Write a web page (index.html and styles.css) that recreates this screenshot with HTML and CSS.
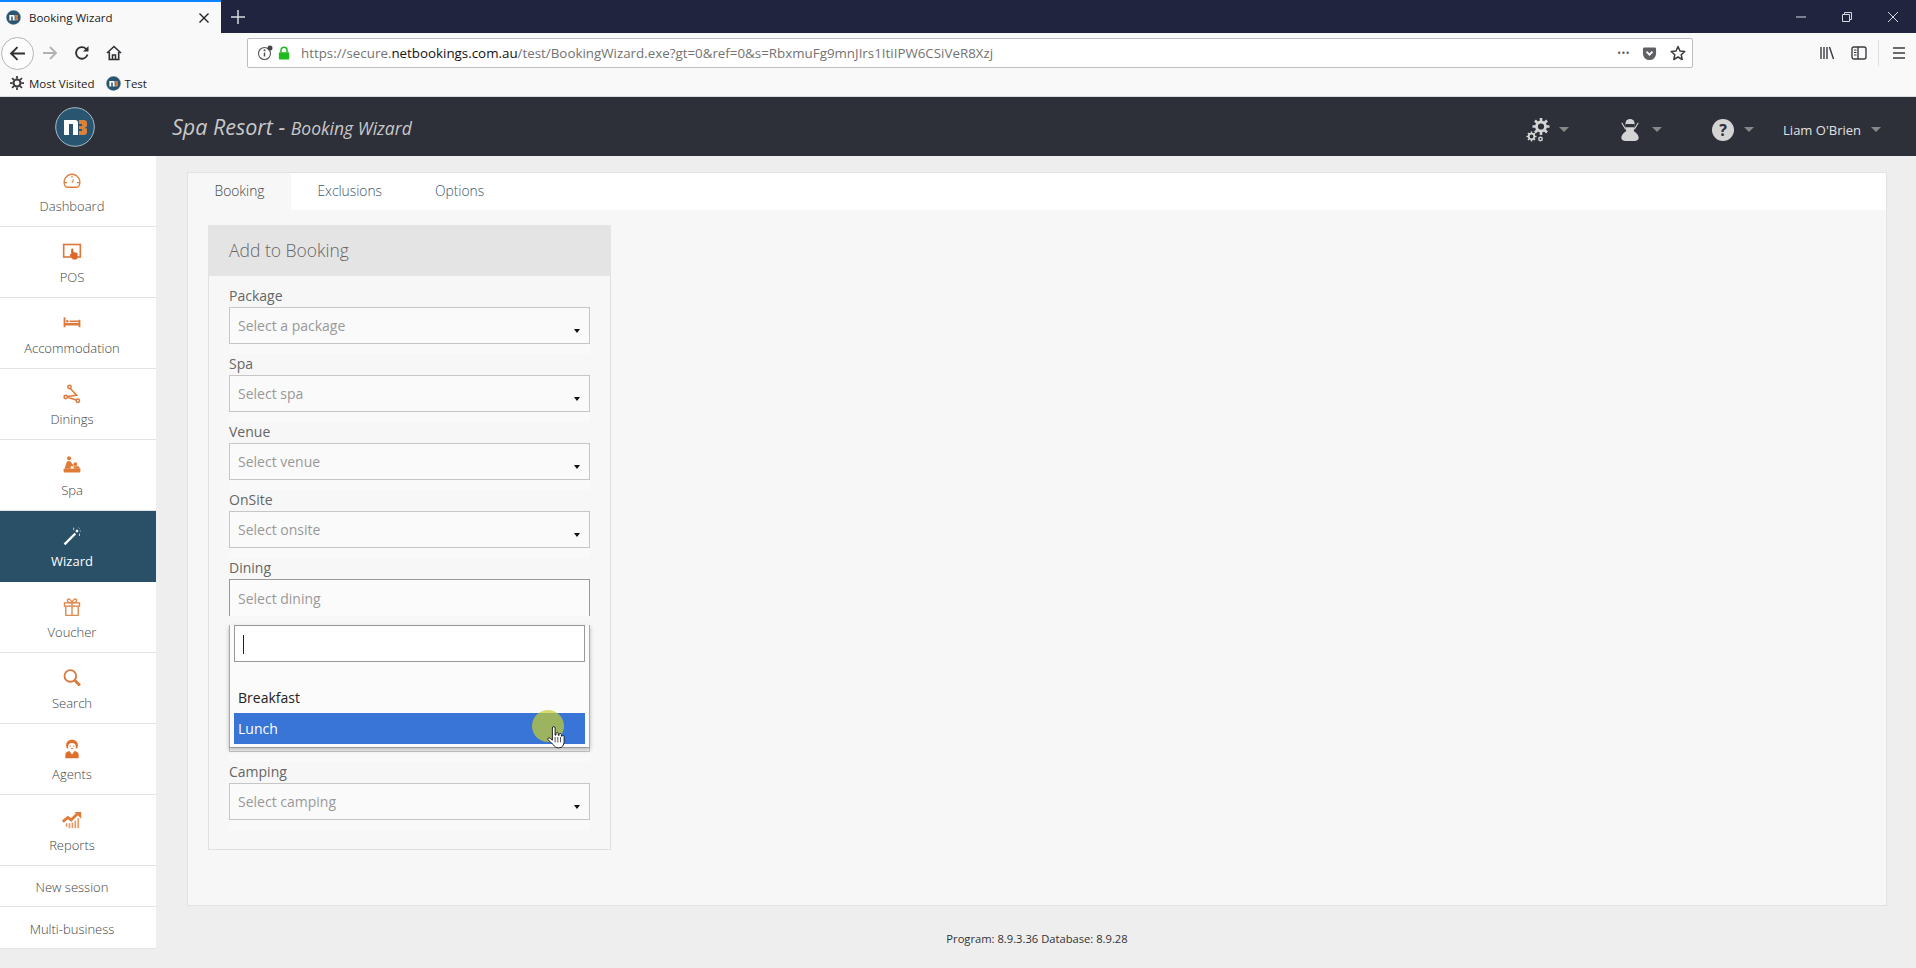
FILE: index.html
```html
<!DOCTYPE html>
<html lang="en">
<head>
<meta charset="utf-8">
<title>Booking Wizard</title>
<link rel="stylesheet" href="styles.css">
</head>
<body>
<svg class="defs" width="0" height="0" aria-hidden="true">
  <symbol id="nb" viewBox="0 0 40 40">
    <circle cx="20" cy="20" r="19.3" fill="#2a5570" stroke="#a9bcc8" stroke-width="1"/>
    <path d="M9 28V13h11a3 3 0 0 1 3 3v12h-5V17h-4v11z" fill="#fff"/>
    <path d="M24 13h5a3 3 0 0 1 3 3v3.5L30 20.500l2 1.500V25a3 3 0 0 1-3 3h-5v-4h3v-2h-3v-3h3v-2h-3z" fill="#d9823b"/>
  </symbol>
</svg>

<header class="titlebar">
  <div class="tab">
    <svg class="favicon"><use href="#nb"/></svg>
    <span class="tab-title">Booking Wizard</span>
    <svg class="tab-close" viewBox="0 0 12 12"><path d="M1.500 1.500l9 9M10.500 1.500l-9 9" stroke="#222" stroke-width="1.400"/></svg>
  </div>
  <svg class="new-tab" viewBox="0 0 14 14"><path d="M7 0v14M0 7h14" stroke="#d8d9e0" stroke-width="1.500"/></svg>
  <div class="win-controls">
    <svg viewBox="0 0 12 12"><path d="M1 6h10" stroke="#d8d9e0"/></svg>
    <svg viewBox="0 0 12 12"><path d="M1.500 3.500h7v7h-7zM3.500 3.500v-2h7v7h-2" fill="none" stroke="#d8d9e0"/></svg>
    <svg viewBox="0 0 12 12"><path d="M1 1l10 10M11 1L1 11" stroke="#d8d9e0"/></svg>
  </div>
</header>

<div class="navbar">
  <div class="nav-btns">
    <span class="back-btn"><svg viewBox="0 0 16 16"><path d="M15 8H2M8 2L2 8l6 6" fill="none" stroke="#2e2e33" stroke-width="1.800"/></svg></span>
    <svg class="nav-ic forward" viewBox="0 0 16 16"><path d="M1 8h13M8 2l6 6-6 6" fill="none" stroke="#b1b1b3" stroke-width="1.800"/></svg>
    <svg class="nav-ic reload" viewBox="0 0 16 16"><path d="M13.500 9.500A5.800 5.800 0 1 1 12 3.800" fill="none" stroke="#2e2e33" stroke-width="1.800"/><path d="M9 6.500h5.500V1z" fill="#2e2e33"/></svg>
    <svg class="nav-ic home" viewBox="0 0 16 16"><path d="M1 8l7-6.500L15 8M3.300 7v7.500h9.400V7" fill="none" stroke="#2e2e33" stroke-width="1.600"/><path d="M6.500 14.500V10h3v4.500" fill="none" stroke="#2e2e33" stroke-width="1.500"/></svg>
  </div>
  <div class="urlbar">
    <svg class="url-info" viewBox="0 0 16 16"><circle cx="7.500" cy="8.500" r="6" fill="none" stroke="#555" stroke-width="1.100"/><path d="M7.500 7.500v4" stroke="#555" stroke-width="1.500"/><circle cx="7.500" cy="5.300" r="1" fill="#555"/><circle cx="13" cy="3" r="2.500" fill="#444"/></svg>
    <svg class="url-lock" viewBox="0 0 14 16"><path d="M3.500 7V4.800a3.500 3.500 0 0 1 7 0V7" fill="none" stroke="#1ebb1e" stroke-width="1.800"/><rect x="1" y="7" width="12" height="8.500" rx="1" fill="#1ebb1e"/></svg>
    <span class="url-text">https://secure.<b class="url-domain">netbookings.com.au</b>/test/BookingWizard.exe?gt=0&amp;ref=0&amp;s=RbxmuFg9mnJIrs1ItiIPW6CSiVeR8Xzj</span>
    <span class="url-dots">•••</span>
    <svg class="url-pocket" viewBox="0 0 16 16"><path d="M1 3a1.500 1.500 0 0 1 1.500-1.500h11A1.500 1.500 0 0 1 15 3v5a7 7 0 0 1-14 0z" fill="#5f5f64"/><path d="M4.800 6L8 9.200 11.200 6" fill="none" stroke="#fff" stroke-width="2"/></svg>
    <svg class="url-star" viewBox="0 0 16 16"><path d="M8 1.500l2 4.500 4.800.5-3.600 3.200 1 4.800L8 12l-4.200 2.500 1-4.800L1.200 6.500 6 6z" fill="none" stroke="#3c3c40" stroke-width="1.500" stroke-linejoin="round"/></svg>
  </div>
  <div class="tool-btns">
    <svg class="tool-lib" viewBox="0 0 16 16"><path d="M2 2v12M5 2v12M8 2v12M10.500 2l4 12" stroke="#3c3c40" stroke-width="1.400" fill="none"/></svg>
    <svg class="tool-side" viewBox="0 0 16 16"><rect x="1" y="2" width="14" height="12" rx="2" fill="none" stroke="#3c3c40" stroke-width="1.400"/><path d="M7 2v12" stroke="#3c3c40" stroke-width="1.400"/><path d="M3 5h2.500M3 7.500h2.500M3 10h2.500" stroke="#3c3c40"/></svg>
    <span class="tool-sep"></span>
    <svg class="tool-menu" viewBox="0 0 16 16"><path d="M2 3h12M2 8h12M2 13h12" stroke="#3c3c40" stroke-width="1.600"/></svg>
  </div>
</div>

<div class="bookmarks">
  <svg class="bm-gear" viewBox="0 0 16 16"><circle cx="8" cy="8" r="4" fill="none" stroke="#3c3c40" stroke-width="2.400"/><path d="M8 0v3M8 13v3M0 8h3M13 8h3M2.300 2.300l2.200 2.200M11.500 11.500l2.200 2.200M13.700 2.300l-2.200 2.200M4.500 11.500l-2.200 2.200" stroke="#3c3c40" stroke-width="2"/></svg>
  <span class="bm-text bm-first">Most Visited</span>
  <svg class="favicon bm-fav"><use href="#nb"/></svg>
  <span class="bm-text">Test</span>
</div>

<div class="app-header">
  <svg class="app-logo"><use href="#nb"/></svg>
  <div class="app-title"><span class="app-resort">Spa Resort - </span><span class="app-page">Booking Wizard</span></div>
  <div class="app-menu">
    <div class="menu-item menu-gears">
      <svg class="ic-gears" viewBox="0 0 24 24"><g fill="none" stroke="#d4d4d4"><circle cx="15" cy="8.500" r="4.500" stroke-width="2.800"/><path d="M15 0v3.500M15 13.500V17M6.500 8.500H10M20 8.500h3.500M9 2.500l2.500 2.500M18.500 12l2.500 2.500M21 2.500L18.500 5M11.500 12L9 14.500" stroke-width="2.600"/><circle cx="5.500" cy="18.500" r="2.800" stroke-width="1.800"/><path d="M5.500 13.500v2M5.500 21.500v2M.5 18.500h2M8.500 18.500h2M2 15l1.400 1.400M7.600 20.600L9 22M9 15l-1.400 1.400M3.400 20.600L2 22" stroke-width="1.600"/><circle cx="14.500" cy="21" r="1.700" stroke-width="1.500"/></g></svg>
      <i class="caret"></i>
    </div>
    <div class="menu-item menu-agent">
      <svg class="ic-agent" viewBox="0 0 24 24"><path d="M12 0a5 5 0 0 0-5 5v5a5 5 0 0 0 10 0V5a5 5 0 0 0-5-5z" fill="#d4d4d4"/><path d="M7 5.500h10V9H7z" fill="#2d2f39"/><path d="M3 4l4 7M21 4l-4 7" stroke="#d4d4d4" stroke-width="1.200"/><path d="M8 13h8c3 2 5.500 4.500 5.500 7.500 0 2.500-2.500 3.500-4.500 3.500H7c-2 0-4.500-1-4.500-3.500C2.500 17.500 5 15 8 13z" fill="#d4d4d4"/></svg>
      <i class="caret"></i>
    </div>
    <div class="menu-item menu-help">
      <span class="ic-help">?</span>
      <i class="caret"></i>
    </div>
    <div class="menu-item menu-user">
      <span class="user-name">Liam O'Brien</span>
      <i class="caret"></i>
    </div>
  </div>
</div>

<div class="workspace">
  <nav class="sidebar">
    <a class="side-item">
      <svg viewBox="0 0 24 24"><path d="M4 18.500a9.500 9.500 0 1 1 16 0c-.5.800-1.500 1-2 1H6c-.5 0-1.500-.2-2-1z" fill="none" stroke="#dd7b3e" stroke-width="1.600"/><path d="M3 14h3M18 14h3M12 6v2M12.500 14l1.200-4" stroke="#dd7b3e" stroke-width="1.400"/></svg>
      <span>Dashboard</span>
    </a>
    <a class="side-item">
      <svg viewBox="0 0 24 24"><rect x="2" y="3" width="20" height="15" fill="none" stroke="#dd7b3e" stroke-width="2"/><path d="M11 9a1.300 1.300 0 0 1 2.600 0v3l5 1.200V19a2 2 0 0 1-2 2h-3.500L9 15.500l1.500-1 .5.500z" fill="#e0672a"/></svg>
      <span>POS</span>
    </a>
    <a class="side-item">
      <svg viewBox="0 0 24 24"><path d="M3 5v12M21 8v9" stroke="#dd7b3e" stroke-width="2.200"/><path d="M3 13.500h18" stroke="#dd7b3e" stroke-width="3"/><path d="M9 9h12v2H9z" fill="#dd7b3e"/><circle cx="6.300" cy="10" r="1.500" fill="#dd7b3e"/></svg>
      <span>Accommodation</span>
    </a>
    <a class="side-item">
      <svg viewBox="0 0 24 24"><g fill="none" stroke="#dd7b3e" stroke-width="1.900"><circle cx="9" cy="3.500" r="2"/><circle cx="4.500" cy="15.500" r="2"/><circle cx="19" cy="20" r="2"/><path d="M10 5.500l7.500 8-11 1.500M6.500 16l10.700 3.300"/></g></svg>
      <span>Dinings</span>
    </a>
    <a class="side-item">
      <svg viewBox="0 0 24 24"><circle cx="8.500" cy="4" r="2.500" fill="#e07a35"/><path d="M6 7.500h4l4.500 6h-4v3H3z" fill="#e07a35"/><circle cx="16" cy="11" r="2.200" fill="#e07a35"/><path d="M14 13.500h6l2 3h-8z" fill="#e07a35"/><path d="M2 16.500h20c.5 2 0 4.500-1 4.500H3c-1 0-1.500-2.500-1-4.500z" fill="#e07a35"/></svg>
      <span>Spa</span>
    </a>
    <a class="side-item side-active">
      <svg viewBox="0 0 24 24"><path d="M2 21L15 8l2 2L4 23z" fill="#fff"/><path d="M16 6l2-2 2 2-2 2z" fill="#fff"/><path d="M14 2v3M21 9v3M20 2l1 1M22.500 6h-1" stroke="#dfe7ec"/></svg>
      <span>Wizard</span>
    </a>
    <a class="side-item">
      <svg viewBox="0 0 24 24"><g fill="none" stroke="#e08a50" stroke-width="1.700"><rect x="3" y="7" width="18" height="4"/><path d="M4.500 11v11h15V11M12 7v15M12 7C8 7 6 5.500 6.500 3.500S10.500 2 12 7zM12 7c4 0 6-1.500 5.500-3.500S13.500 2 12 7z"/></g></svg>
      <span>Voucher</span>
    </a>
    <a class="side-item">
      <svg viewBox="0 0 24 24"><circle cx="10" cy="9.500" r="7" fill="none" stroke="#d9793a" stroke-width="2.200"/><path d="M15.500 15l6 6" stroke="#d9793a" stroke-width="3.400"/></svg>
      <span>Search</span>
    </a>
    <a class="side-item">
      <svg viewBox="0 0 24 24"><path d="M12 1c-4.500 0-7 3-7 6.500 0 1.800.5 3 1 4h12c.5-1 1-2.200 1-4C19 4 16.500 1 12 1z" fill="#df6f2c"/><ellipse cx="12" cy="9.500" rx="4.700" ry="4.800" fill="#fff"/><path d="M9 8.500h2M13 8.500h2M10.500 11.500h3" stroke="#df6f2c"/><path d="M4 23v-4c0-2.500 2-4 5-4.500l3 4 3-4c3 .5 5 2 5 4.500v4z" fill="#df6f2c"/></svg>
      <span>Agents</span>
    </a>
    <a class="side-item">
      <svg viewBox="0 0 24 24"><path d="M1 14l6-5 4 3 7-7" fill="none" stroke="#df7a37" stroke-width="3.400"/><path d="M15 2.500h8v8z" fill="#df7a37"/><path d="M5.500 20v-4M9 22v-6M12.500 22v-7M16 22v-9M19.500 22V10" stroke="#e59a68" stroke-width="2"/></svg>
      <span>Reports</span>
    </a>
    <a class="side-link side-link-first">New session</a>
    <a class="side-link">Multi-business</a>
  </nav>

  <main class="main">
    <section class="card">
      <div class="tabs">
        <span class="tab-link tab-current">Booking</span>
        <span class="tab-link">Exclusions</span>
        <span class="tab-link">Options</span>
      </div>
      <div class="booking-panel">
        <h2 class="panel-title">Add to Booking</h2>
        <div class="panel-body">
          <div class="field"><label class="field-label">Package</label><div class="select"><span>Select a package</span><i class="select-arrow"></i></div></div>
          <div class="field"><label class="field-label">Spa</label><div class="select"><span>Select spa</span><i class="select-arrow"></i></div></div>
          <div class="field"><label class="field-label">Venue</label><div class="select"><span>Select venue</span><i class="select-arrow"></i></div></div>
          <div class="field"><label class="field-label">OnSite</label><div class="select"><span>Select onsite</span><i class="select-arrow"></i></div></div>
          <div class="field field-open">
            <label class="field-label">Dining</label>
            <div class="select select-open"><span>Select dining</span></div>
            <div class="dropdown">
              <div class="drop-search"><i class="text-cursor"></i></div>
              <div class="drop-option">Breakfast</div>
              <div class="drop-option drop-hover">Lunch</div>
            </div>
            <span class="click-halo"></span>
            <svg class="hand-cursor" viewBox="0 0 20 26"><path d="M6 3a1.500 1.500 0 0 1 3 0v8l1-.2V9a1.300 1.300 0 0 1 2.500 0v2l1 .2V10a1.300 1.300 0 0 1 2.500 0v2l.8.200V12a1.200 1.200 0 0 1 2.200 0v6c0 4-2 7-6 7-3 0-4.500-1-6-3.500L1 16c-.8-1.500 1-3 2.500-1.500L6 16.500z" fill="#fff" stroke="#111" stroke-width="1"/><path d="M9 13v6M12 13v6M15 13v6" stroke="#111" stroke-width=".8"/></svg>
          </div>
          <div class="field field-hidden"><div class="field-label"></div><div class="select"></div></div>
          <div class="field field-hidden"><div class="field-label"></div><div class="select"></div></div>
          <div class="field"><label class="field-label">Camping</label><div class="select"><span>Select camping</span><i class="select-arrow"></i></div></div>
        </div>
      </div>
    </section>
    <footer class="version">Program: 8.9.3.36 Database: 8.9.28</footer>
  </main>
</div>
</body>
</html>
```
FILE: styles.css
```css
* { box-sizing: border-box; }
html, body { margin: 0; height: 968px; overflow: hidden; }
body { display: flex; flex-direction: column; background: #eee; font-family: "Open Sans", "Liberation Sans", sans-serif; color: #555; }
.defs { position: absolute; }

/* Browser chrome */
.titlebar { height: 33px; flex: none; display: flex; align-items: center; background: #20243f; }
.tab { width: 221px; height: 33px; display: flex; align-items: center; background: #f9f9fa; border-top: 2px solid #0a84ff; padding: 0 11px 0 6px; }
.favicon { width: 15px; height: 15px; flex: none; }
.tab-title { margin-left: 8px; flex: 1; font-size: 11.500px; color: #222; }
.tab-close { width: 12px; height: 12px; }
.new-tab { width: 14px; height: 14px; margin-left: 10px; }
.win-controls { margin-left: auto; display: flex; gap: 34px; padding-right: 17px; }
.win-controls svg { width: 12px; height: 12px; display: block; }

.navbar { height: 37px; flex: none; display: flex; align-items: center; background: #f9f9fa; padding-top: 3px; }
.nav-btns { width: 247px; flex: none; display: flex; align-items: center; }
.back-btn { width: 33px; height: 33px; margin-left: 1px; border: 1px solid #b4b4b4; border-radius: 50%; background: #fdfdfd; display: flex; align-items: center; justify-content: center; }
.back-btn svg { width: 17px; height: 17px; }
.nav-ic { width: 16px; height: 16px; flex: none; }
.forward { margin-left: 8px; }
.reload { margin-left: 16px; }
.home { margin-left: 16px; }
.urlbar { width: 1446px; height: 30px; flex: none; display: flex; align-items: center; background: #fff; border: 1px solid #bdbdbd; border-radius: 2px; padding: 0 6px 0 9px; }
.url-info { width: 16px; height: 16px; flex: none; }
.url-lock { width: 12px; height: 14px; margin-left: 5px; flex: none; }
.url-text { margin-left: 11px; flex: 1; font-size: 13.350px; color: #737373; white-space: nowrap; }
.url-domain { font-weight: 400; color: #111; }
.url-dots { font-size: 10px; letter-spacing: .5px; color: #555; margin-right: 12px; }
.url-pocket { width: 15px; height: 15px; flex: none; margin-right: 13px; }
.url-star { width: 16px; height: 16px; flex: none; }
.tool-btns { flex: 1; display: flex; align-items: center; padding-left: 126px; }
.tool-lib, .tool-side, .tool-menu { width: 16px; height: 16px; flex: none; }
.tool-side { margin-left: 16px; }
.tool-sep { width: 1px; height: 26px; background: #e0e0e2; margin: 0 12px 0 11px; }

.bookmarks { height: 27px; flex: none; display: flex; align-items: center; background: #f9f9fa; border-bottom: 1px solid #dcdcde; padding-left: 10px; }
.bm-gear { width: 14px; height: 14px; flex: none; }
.bm-text { font-size: 11.500px; color: #222; }
.bm-first { margin-left: 5px; }
.bm-fav { margin: 0 4px 0 11px; }

/* App header */
.app-header { height: 59px; flex: none; display: flex; align-items: center; background: #2d2f39; position: relative; }
.app-logo { width: 40px; height: 40px; margin-left: 55px; flex: none; }
.app-title { margin-left: 77px; color: #c8c8c8; font-style: italic; font-weight: 400; white-space: nowrap; }
.app-resort { font-size: 21.500px; }
.app-page { font-size: 17.500px; }
.app-menu { margin-left: auto; display: flex; align-items: center; padding-top: 6px; }
.menu-item { display: flex; align-items: center; }
.caret { display: block; width: 0; height: 0; border-left: 5px solid transparent; border-right: 5px solid transparent; border-top: 5px solid #888; }
.ic-gears { width: 24px; height: 24px; }
.menu-gears .caret { margin-left: 9px; }
.ic-agent { width: 22px; height: 24px; }
.menu-agent { margin-left: 50px; }
.menu-agent .caret { margin-left: 11px; }
.ic-help { width: 22px; height: 22px; border-radius: 50%; background: #d4d4d4; color: #2d2f39; font: 700 16px/22px "Open Sans", sans-serif; text-align: center; }
.menu-help { margin-left: 50px; }
.menu-help .caret { margin-left: 10px; }
.menu-user { margin-left: 29px; padding-right: 35px; }
.user-name { font-size: 13px; color: #e2e2e2; }
.menu-user .caret { margin-left: 10px; }

/* Layout below the header */
.workspace { flex: 1; display: flex; min-height: 0; }
.sidebar { width: 156px; flex: none; height: 793px; background: #fff; border-bottom: 1px solid #e2e2e2; display: flex; flex-direction: column; }
.side-item { height: 71px; flex: none; display: flex; flex-direction: column; align-items: center; padding: 13px 12px 0 0; border-bottom: 1px solid #e2e2e4; font-size: 13px; font-weight: 300; color: #444; }
.side-item svg { width: 20px; height: 20px; flex: none; margin-top: 2px; margin-bottom: 6px; }
.side-item span { line-height: 18px; }
.side-active { background: #2a5068; color: #fff; font-weight: 400; border-bottom-color: #2a5068; }
.side-link { flex: none; height: 41px; display: flex; align-items: center; justify-content: center; padding: 2px 12px 0 0; font-size: 13px; font-weight: 300; color: #444; border-bottom: 1px solid #e2e2e4; }
.side-link:last-child { border-bottom: 0; }

.main { flex: 1; min-width: 0; padding: 16px 29px 0 31px; display: flex; flex-direction: column; }
.card { height: 734px; flex: none; background: #f7f7f7; border: 1px solid #e2e2e2; }
.tabs { height: 37px; display: flex; background: #fff; }
.tab-link { padding: 0 26.500px; line-height: 35px; font-size: 13.800px; font-weight: 300; color: #3a5570; }
.tab-current { background: #f7f7f7; color: #444; }

.booking-panel { width: 403px; height: 625px; margin: 15px 0 0 20px; border: 1px solid #e0e0e0; border-top: 0; }
.panel-title { margin: 0 -1px; height: 51px; padding-left: 21px; background: #e4e4e4; font-size: 17.500px; font-weight: 300; line-height: 50px; color: #666; }
.panel-body { padding: 0 20px; }
.field { position: relative; }
.field-label { display: block; height: 31px; padding-top: 10px; font-size: 14px; line-height: 20px; color: #666; }
.select { position: relative; height: 37px; display: flex; align-items: center; padding-left: 8px; background: #fafafa; border: 1px solid #c6c6c6; box-shadow: 0 10px 0 #f9f9f9; font-size: 14px; color: #999; }
.select-arrow { position: absolute; right: 9px; top: 21px; width: 0; height: 0; border-left: 3.500px solid transparent; border-right: 3.500px solid transparent; border-top: 4px solid #111; }
.select-open { border-color: #999; border-bottom: 0; background: #fbfbfb; box-shadow: none; }

/* Open dining dropdown */
.dropdown { position: absolute; z-index: 2; left: 0; right: 0; top: 77px; height: 123px; padding: 0 4px; background: #fbfbfb; border: 1px solid #aaa; border-top: 0; border-bottom-color: #999; box-shadow: 0 2px 4px rgba(0, 0, 0, .25); }
.drop-search { height: 37px; margin-bottom: 20px; padding: 9px 0 0 8px; background: #fff; border: 1px solid #999; }
.text-cursor { display: block; width: 1px; height: 19px; background: #222; }
.drop-option { height: 31px; padding-left: 4px; font-size: 14px; line-height: 31px; color: #222; }
.drop-hover { background: #3875d7; color: #fff; }
.click-halo { position: absolute; z-index: 3; left: 303px; top: 162px; width: 32px; height: 32px; border-radius: 50%; background: rgba(200, 205, 45, .7); }
.hand-cursor { position: absolute; z-index: 4; left: 318px; top: 177px; width: 18px; height: 24px; }

.version { margin-top: 26px; text-align: center; font-size: 11.200px; line-height: 14px; color: #333; }
```
